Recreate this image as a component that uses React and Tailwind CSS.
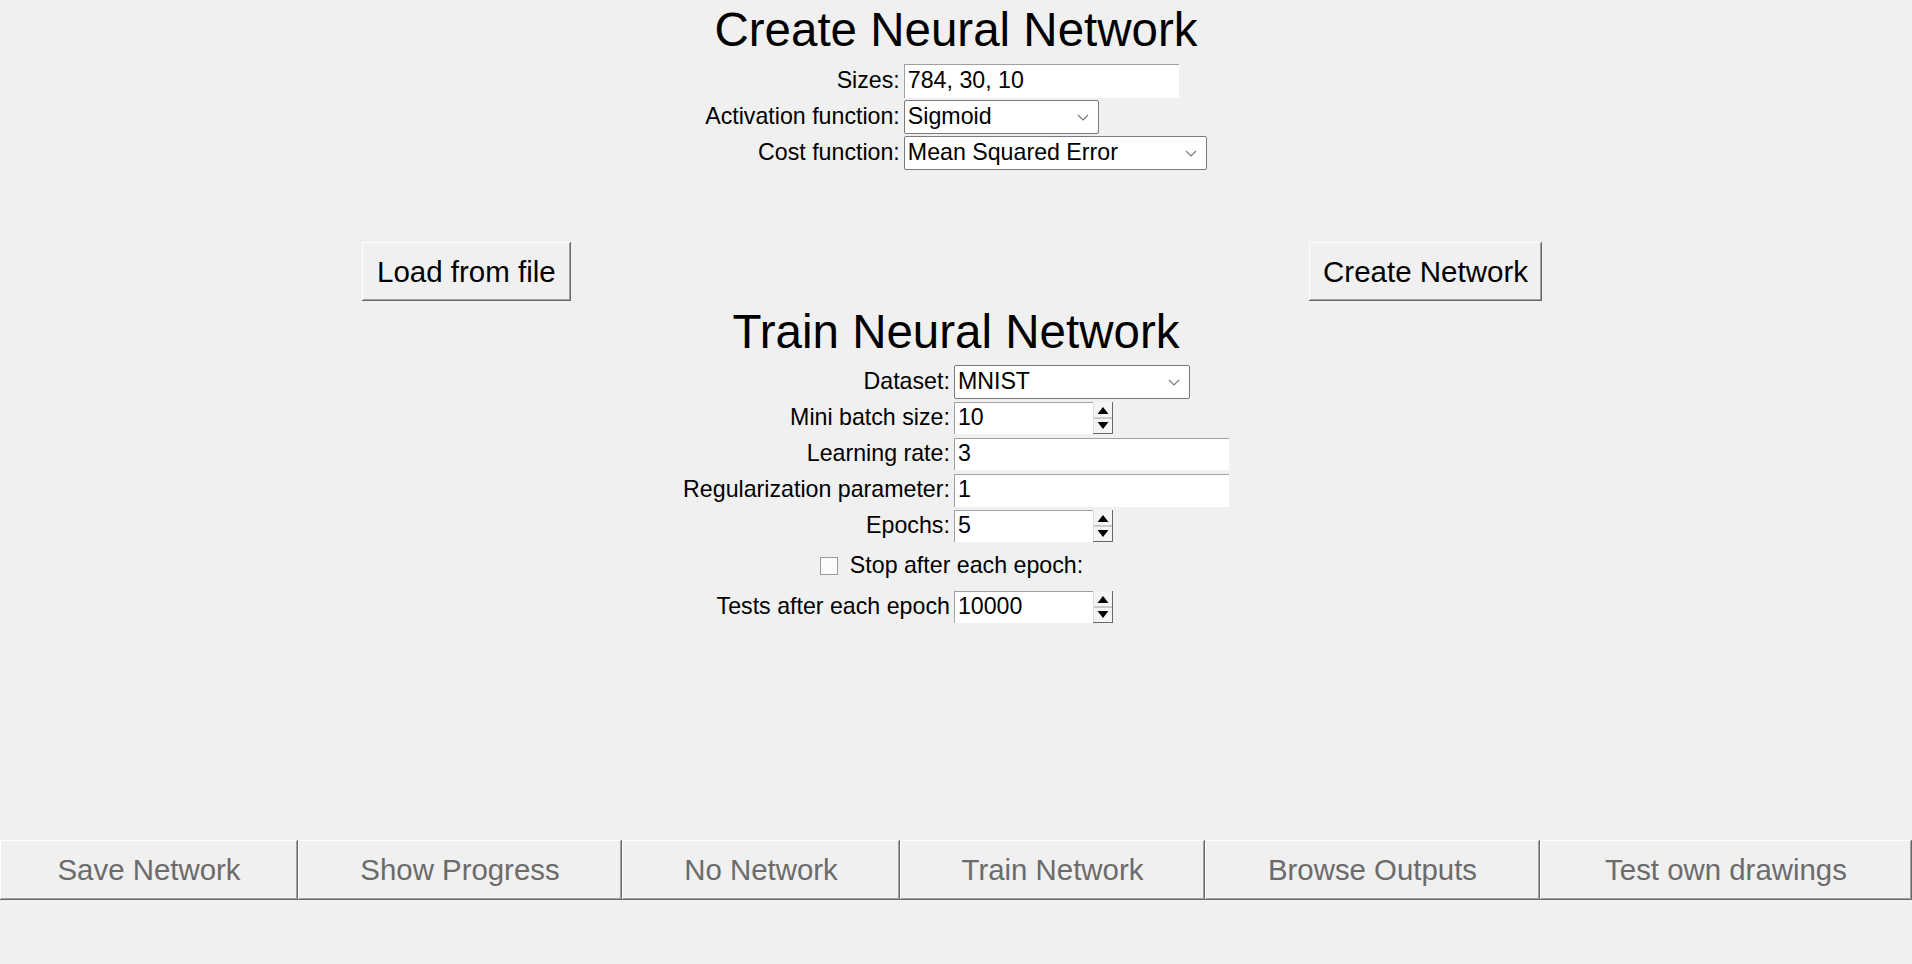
import React from "react";

const raised =
  "shadow-[inset_-1px_-1px_0_#696969,inset_1px_1px_0_#ffffff,inset_-2px_-2px_0_#a0a0a0]";

function Label({ children }) {
  return (
    <div className="justify-self-end text-[23.2px] leading-none whitespace-nowrap text-black">
      {children}
    </div>
  );
}

function TextField({ value, className }) {
  return (
    <div
      className={
        "bg-white shadow-[inset_1px_1px_0_#a0a0a0] pl-[4px] flex items-center text-[23.2px] leading-none text-black " +
        className
      }
    >
      {value}
    </div>
  );
}

function Chevron() {
  return (
    <svg width="12" height="7" viewBox="0 0 12 7" className="shrink-0">
      <polyline
        points="1,1 6,6 11,1"
        fill="none"
        stroke="#7a7a7a"
        strokeWidth="1.2"
      />
    </svg>
  );
}

function Select({ value, className }) {
  return (
    <div
      className={
        "bg-white border border-[#7a7a7a] rounded-[2px] flex items-center justify-between pl-[3px] pr-[9px] text-[23.2px] leading-none text-black " +
        className
      }
    >
      <span>{value}</span>
      <Chevron />
    </div>
  );
}

function SpinButtons() {
  return (
    <svg width="20" height="32" viewBox="0 0 20 32" className="shrink-0 self-stretch">
      <rect x="0" y="0" width="20" height="32" fill="#f4f4f4" />
      <line x1="0.5" y1="1" x2="0.5" y2="31" stroke="#dcdcdc" />
      <line x1="1" y1="16" x2="19" y2="16" stroke="#a0a0a0" />
      <line x1="19.5" y1="0" x2="19.5" y2="32" stroke="#696969" />
      <line x1="0" y1="31.5" x2="20" y2="31.5" stroke="#696969" />
      <polygon points="4.5,12 15.5,12 10,5" fill="#000" />
      <polygon points="4.5,20 15.5,20 10,27" fill="#000" />
    </svg>
  );
}

function Spinner({ value }) {
  return (
    <div className="w-[159px] h-[32px] bg-white shadow-[inset_1px_1px_0_#a0a0a0] flex items-center text-[23.2px] leading-none text-black">
      <span className="flex-1 pl-[4px]">{value}</span>
      <SpinButtons />
    </div>
  );
}

function Tab({ children, className }) {
  return (
    <div
      className={
        "h-full flex items-center justify-center whitespace-nowrap text-[29.4px] leading-none text-[#6b6b6b] " +
        raised +
        " " +
        className
      }
    >
      {children}
    </div>
  );
}

export default function App() {
  return (
    <div className="h-screen w-full bg-[#f0f0f0] flex flex-col font-['Liberation_Sans',Arial,sans-serif] text-black overflow-hidden">
      <h1 className="pt-[3px] text-center text-[47.5px] leading-[54px] font-normal">
        Create Neural Network
      </h1>

      <div className="mt-[6px] grid grid-cols-[auto_auto] justify-center gap-x-[4px] auto-rows-[36px] items-center">
        <Label>Sizes:</Label>
        <TextField value="784, 30, 10" className="w-[275px] h-[34px]" />
        <Label>Activation function:</Label>
        <Select value="Sigmoid" className="w-[195px] h-[34px]" />
        <Label>Cost function:</Label>
        <Select value="Mean Squared Error" className="w-[303px] h-[34px]" />
      </div>

      <div className="mt-[71px] flex justify-between pl-[362px] pr-[370px]">
        <button
          className={
            "h-[59px] px-[15px] bg-[#f0f0f0] text-[29.5px] leading-none text-black whitespace-nowrap " +
            raised
          }
        >
          Load from file
        </button>
        <button
          className={
            "h-[59px] px-[14px] bg-[#f0f0f0] text-[29.5px] leading-none text-black whitespace-nowrap " +
            raised
          }
        >
          Create Network
        </button>
      </div>

      <h1 className="mt-[4px] text-center text-[47.5px] leading-[54px] font-normal">
        Train Neural Network
      </h1>

      <div className="mt-[5px] grid grid-cols-[auto_auto] justify-center gap-x-[4px] items-center">
        <div className="h-[36px] flex items-center justify-self-end">
          <Label>Dataset:</Label>
        </div>
        <Select value="MNIST" className="w-[236px] h-[34px]" />

        <div className="h-[36px] flex items-center justify-self-end">
          <Label>Mini batch size:</Label>
        </div>
        <Spinner value="10" />

        <div className="h-[36px] flex items-center justify-self-end">
          <Label>Learning rate:</Label>
        </div>
        <TextField value="3" className="w-[275px] h-[32px]" />

        <div className="h-[36px] flex items-center justify-self-end">
          <Label>Regularization parameter:</Label>
        </div>
        <TextField value="1" className="w-[275px] h-[33px]" />

        <div className="h-[36px] flex items-center justify-self-end">
          <Label>Epochs:</Label>
        </div>
        <Spinner value="5" />

        <div className="col-span-2 h-[46px] pb-[2px] flex items-center justify-center pr-[9px]">
          <div className="w-[18px] h-[18px] bg-[#fbfbfb] border border-[#9a9a9a]" />
          <span className="ml-[12px] text-[23.2px] leading-none">
            Stop after each epoch:
          </span>
        </div>

        <div className="h-[34px] flex items-center justify-self-end">
          <Label>Tests after each epoch</Label>
        </div>
        <Spinner value="10000" />
      </div>

      <div className="mt-auto mb-[64px] h-[60px] flex w-full">
        <Tab className="w-[298px] shrink-0">Save Network</Tab>
        <Tab className="w-[324px] shrink-0">Show Progress</Tab>
        <Tab className="w-[278px] shrink-0">No Network</Tab>
        <Tab className="w-[305px] shrink-0">Train Network</Tab>
        <Tab className="w-[335px] shrink-0">Browse Outputs</Tab>
        <Tab className="flex-1">Test own drawings</Tab>
      </div>
    </div>
  );
}
